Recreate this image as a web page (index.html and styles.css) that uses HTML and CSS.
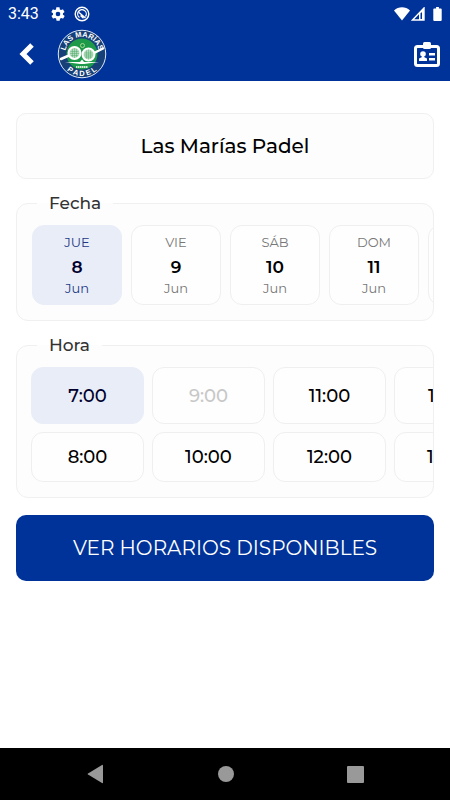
FILE: index.html
```html
<!DOCTYPE html>
<html lang="es">
<head>
    <meta charset="UTF-8">
    <meta name="viewport" content="width=device-width, initial-scale=1.0">
    <title>Las Marías Padel</title>

    <link rel="stylesheet" href="styles.css">
</head>

<body>
    <div class="status-bar">
        <span class="clock">3:43</span>
        <svg class="gear" width="16" height="16" viewBox="0 0 24 24" fill="#fff"><path d="M19.400 13c0-.3.1-.6.1-1s0-.7-.1-1l2.100-1.600c.2-.2.300-.4.100-.6l-2-3.500c-.1-.2-.4-.3-.6-.2l-2.500 1c-.5-.4-1.100-.7-1.700-1l-.4-2.600c0-.3-.2-.5-.5-.5h-4c-.2 0-.5.2-.5.400l-.4 2.700c-.6.2-1.200.6-1.700 1l-2.500-1c-.2-.1-.5 0-.6.200l-2 3.500c-.1.200-.1.400.1.600L4.600 11c0 .3-.1.600-.1 1s0 .7.1 1l-2.100 1.600c-.2.200-.3.400-.1.600l2 3.500c.1.200.4.300.6.200l2.500-1c.5.400 1.100.7 1.700 1l.4 2.600c0 .3.200.5.500.5h4c.2 0 .5-.2.500-.4l.4-2.700c.6-.2 1.200-.6 1.700-1l2.500 1c.2.100.5 0 .6-.2l2-3.500c.1-.2.100-.4-.1-.6zM12 15.500a3.500 3.500 0 1 1 0-7 3.500 3.500 0 0 1 0 7z"/></svg>
        <svg width="16" height="16" viewBox="0 0 16 16" fill="none" stroke="#fff"><circle cx="8" cy="8" r="6.800" stroke-width="1.400"/><path d="M5.500 11.500A4.300 4.300 0 1 1 11.500 10.500" stroke-width="1.300"/><path d="M5 6.500 11.500 12M6.500 9.500 9.500 12.300" stroke-width="1.400"/></svg>
        <div class="signals">
            <svg width="16" height="14" viewBox="0 0 16 14" fill="#fff"><path d="M0 3.500C4.500-.8 11.500-.8 16 3.500L8 13.500z"/></svg>
            <svg width="14" height="14" viewBox="0 0 14 14"><path d="M13 1v12H1.500z" fill="none" stroke="#fff" stroke-width="1.400"/><path d="M8 6 13 1v12H8z" fill="#fff"/><path d="M9.500 6.500V12H11V5z" fill="#003399"/></svg>
            <svg class="battery" width="9" height="14" viewBox="0 0 9 15" fill="#fff"><path d="M3 0h3v1.500h2a1 1 0 0 1 1 1V14a1 1 0 0 1-1 1H1a1 1 0 0 1-1-1V2.500a1 1 0 0 1 1-1h2z"/></svg>
        </div>
    </div>

    <header class="header">
        <button class="icon-btn" aria-label="Volver">
            <svg width="16" height="24" viewBox="0 0 16 24" fill="none" stroke="#fff" stroke-width="5"><path d="M14 3 5 12l9 9"/></svg>
        </button>
        <svg class="logo" width="50" height="50" viewBox="0 0 100 100">
            <defs>
                <path id="arcTop" d="M16 50a34 34 0 0 1 68 0"/>
                <path id="arcBottom" d="M6 50a44 44 0 0 0 88 0"/>
            </defs>
            <circle cx="50" cy="50" r="47.500" fill="#173f78" stroke="#dfe8f5" stroke-width="2"/>
            <circle cx="50" cy="50" r="31" fill="#1d9a49"/>
            <g stroke="#fff" stroke-width="5" stroke-linecap="round">
                <path d="M24 53 8 60M76 47l16-8"/>
            </g>
            <g fill="#b5dcbf" stroke="#fff" stroke-width="4">
                <circle cx="35" cy="48" r="12"/>
                <circle cx="63" cy="51" r="12"/>
            </g>
            <g stroke="#4fac6b" stroke-width="1">
                <path d="M27 45h16M26 49h18M28 53h14M31 40v16M35 38v20M39 40v16"/>
                <path d="M55 48h16M54 52h18M56 56h14M59 43v16M63 41v20M67 43v16"/>
            </g>
            <circle cx="51" cy="33" r="4" fill="none" stroke="#a9d690" stroke-width="2"/>
            <path d="M16 66 46 66l4-5 4 5 30 0-30 4H46z" fill="#fff"/>
            <path d="M38 76h24" stroke="#d5ecd9" stroke-width="4" stroke-dasharray="3 1"/>
            <g class="logo-text">
                <text><textPath href="#arcTop" startOffset="50%">LAS MARÍAS</textPath></text>
                <text><textPath href="#arcBottom" startOffset="50%">P A D E L</textPath></text>
            </g>
        </svg>
        <button class="icon-btn card-btn" aria-label="Mi carnet">
            <svg width="26" height="25" viewBox="0 0 26 25"><rect x="1.500" y="4.500" width="23" height="19" rx="2" fill="none" stroke="#fff" stroke-width="3"/><rect x="9" y="0" width="8" height="7" rx="1.500" fill="#fff"/><g fill="#fff"><circle cx="9" cy="12" r="2.800"/><path d="M8 13h2v2l3 1.500V19H5v-2.500L8 15z"/><path d="M15 11h6v2.500h-6zM15 16h6v2.500h-6z"/></g></svg>
        </button>
    </header>

    <main class="content">
        <h1 class="club">Las Marías Padel</h1>

        <fieldset class="group">
            <legend>Fecha</legend>
            <div class="scroller days">
                <button class="option day selected" aria-pressed="true"><span>JUE</span><b>8</b><span>Jun</span></button>
                <button class="option day"><span>VIE</span><b>9</b><span>Jun</span></button>
                <button class="option day"><span>SÁB</span><b>10</b><span>Jun</span></button>
                <button class="option day"><span>DOM</span><b>11</b><span>Jun</span></button>
                <button class="option day" aria-label="Siguiente día"></button>
            </div>
        </fieldset>

        <fieldset class="group">
            <legend>Hora</legend>
            <div class="scroller hours">
                <button class="option selected" aria-pressed="true">7:00</button>
                <button class="option">8:00</button>
                <button class="option" disabled>9:00</button>
                <button class="option">10:00</button>
                <button class="option">11:00</button>
                <button class="option">12:00</button>
                <button class="option">13:00</button>
                <button class="option">14:00</button>
            </div>
        </fieldset>

        <button class="submit">VER HORARIOS DISPONIBLES</button>
    </main>

    <nav class="nav-bar">
        <button aria-label="Atrás"><svg width="18" height="20" viewBox="0 0 18 20" fill="#999"><path d="M16 1.500v17a.7.7 0 0 1-1 .5L1 10.600a.7.7 0 0 1 0-1.200L15 1a.7.7 0 0 1 1 .5z"/></svg></button>
        <button aria-label="Inicio"><svg width="16" height="16" viewBox="0 0 16 16" fill="#999"><circle cx="8" cy="8" r="8"/></svg></button>
        <button aria-label="Recientes"><svg width="17" height="17" viewBox="0 0 17 17" fill="#999"><rect width="17" height="17" rx="1"/></svg></button>
    </nav>
</body>
</html>
```

FILE: styles.css
```css
* {
    box-sizing: border-box;
}

body {
    margin: 0;
    min-height: 100vh;
    display: flex;
    flex-direction: column;
    background-color: #fff;
    color: #000;
    font-family: "Montserrat", "Inter", sans-serif;
}

button {
    margin: 0;
    padding: 0;
    border: none;
    background: none;
    color: inherit;
    font-family: inherit;
    cursor: pointer;
}

svg {
    display: block;
}

.status-bar {
    display: flex;
    align-items: center;
    gap: 8px;
    height: 27px;
    padding: 0 8px;
    background-color: #003399;
    color: #fff;
    font-family: Roboto, sans-serif;
    font-size: 16px;
}

.gear {
    margin-left: 3px;
}

.signals {
    display: flex;
    align-items: center;
    gap: 1px;
    margin-left: auto;
}

.battery {
    margin: 0 0 0 7px;
}

.header {
    display: flex;
    align-items: center;
    height: 54px;
    padding: 0 10px 0 18px;
    background-color: #003399;
}

.logo {
    margin-left: 23px;
}

.logo-text {
    fill: #fff;
    font-family: "Liberation Sans", sans-serif;
    font-size: 15px;
    font-weight: bold;
    text-anchor: middle;
}

.card-btn {
    margin-left: auto;
}

.content {
    flex: 1;
    display: flex;
    flex-direction: column;
    gap: 14px;
    padding: 32px 16px;
}

.club {
    margin: 0;
    padding: 19px;
    border: 1px solid #f0f0f0;
    border-radius: 10px;
    background-color: #fdfdfd;
    font-size: 20px;
    font-weight: 500;
    line-height: 26px;
    text-align: center;
}

.group {
    min-width: 0;
    margin: 0;
    padding: 12px 0 15px;
    border: 1px solid #f0f0f0;
    border-radius: 12px;
    background-color: #fdfdfd;
}

.group legend {
    margin-left: 20px;
    padding: 0 12px;
    color: #333;
    font-size: 17px;
    font-weight: 500;
    line-height: 20px;
}

.scroller {
    padding: 0 15px;
    overflow-x: auto;
    scrollbar-width: none;
}

.days {
    display: flex;
    gap: 9px;
}

.hours {
    display: grid;
    grid-template-rows: 57px 50px;
    grid-auto-flow: column;
    grid-auto-columns: 113px;
    gap: 8px;
    padding: 0 14px;
}

.option {
    border: 1px solid #efefef;
    border-radius: 12px;
    background-color: #fefefe;
    font-size: 18px;
    font-weight: 500;
}

.option:disabled {
    color: #c8c8c8;
}

.option.selected {
    border-color: #e9edf7;
    background-color: #e9edf7;
    color: #00002e;
}

.day {
    flex: 0 0 90px;
    height: 80px;
    display: flex;
    flex-direction: column;
    align-items: center;
    justify-content: center;
}

.day span {
    color: #777;
    font-size: 13px;
    font-weight: 400;
    line-height: 18px;
}

.day b {
    padding-top: 4px;
    font-size: 17px;
    font-weight: 600;
    line-height: 24px;
}

.day.selected span {
    color: #1d3a86;
}

.submit {
    height: 66px;
    margin-top: 3px;
    border-radius: 10px;
    background-color: #003399;
    color: #fff;
    font-size: 20px;
    font-weight: 400;
}

.nav-bar {
    display: flex;
    align-items: center;
    justify-content: space-around;
    height: 52px;
    padding: 0 30px;
    background-color: #000;
}
```
